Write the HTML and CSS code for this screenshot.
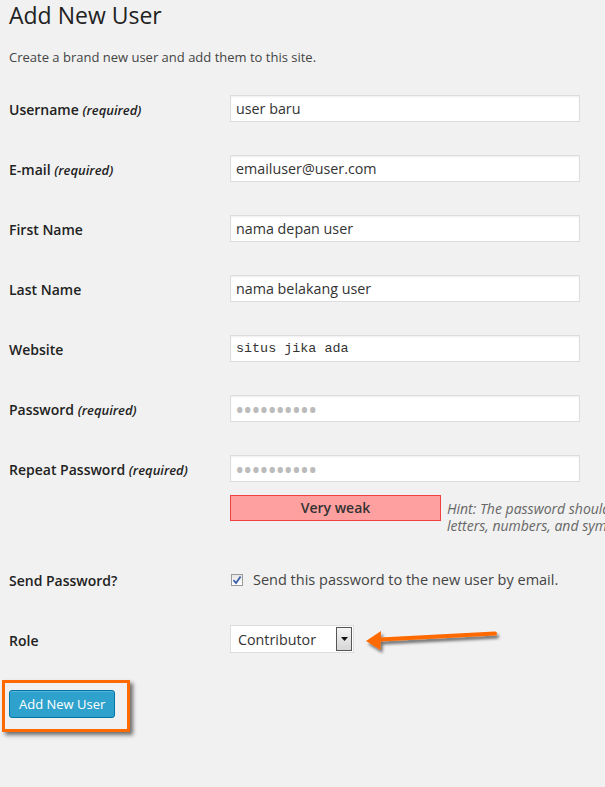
FILE: index.html
```html
<!DOCTYPE html>
<html lang="en">
<head>
<meta charset="UTF-8">
<meta name="viewport" content="width=device-width, initial-scale=1.0">
<title>Add New User</title>
<link rel="stylesheet" href="styles.css">
</head>
<body>
<div class="wrap">
    <h1>Add New User</h1>
    <p class="intro">Create a brand new user and add them to this site.</p>

    <form id="createuser" method="POST">
        <div class="row">
            <label for="user_login">Username <span class="req">(required)</span></label>
            <div class="field"><input type="text" id="user_login" value="user baru"></div>
        </div>
        <div class="row">
            <label for="email">E-mail <span class="req">(required)</span></label>
            <div class="field"><input type="text" id="email" value="emailuser@user.com"></div>
        </div>
        <div class="row">
            <label for="first_name">First Name</label>
            <div class="field"><input type="text" id="first_name" value="nama depan user"></div>
        </div>
        <div class="row">
            <label for="last_name">Last Name</label>
            <div class="field"><input type="text" id="last_name" value="nama belakang user"></div>
        </div>
        <div class="row">
            <label for="url">Website</label>
            <div class="field"><input type="text" id="url" class="code" value="situs jika ada"></div>
        </div>
        <div class="row">
            <label for="pass1">Password <span class="req">(required)</span></label>
            <div class="field"><input type="password" id="pass1" class="pass" value="aaaaaaaaaa"></div>
        </div>
        <div class="row row-pass2">
            <label for="pass2">Repeat Password <span class="req">(required)</span></label>
            <div class="field">
                <input type="password" id="pass2" class="pass" value="aaaaaaaaaa">
                <div class="strength-row">
                    <div class="strength">Very weak</div>
                    <p class="hint">
                        <span>Hint: The password should be at least seven characters long.</span>
                        <span>letters, numbers, and symbols like ! " ? $ % ^ &amp; ).</span>
                    </p>
                </div>
            </div>
        </div>
        <div class="row">
            <label>Send Password?</label>
            <div class="field check-field">
                <span class="checkbox">
                    <svg width="10" height="10" viewBox="0 0 10 10"><path d="M1.5 5.2 L4 8 L8.6 1.4" fill="none" stroke="#3f5fa8" stroke-width="1.8"/></svg>
                </span>
                Send this password to the new user by email.
            </div>
        </div>
        <div class="row">
            <label>Role</label>
            <div class="field">
                <div class="select">
                    <span>Contributor</span>
                    <span class="select-btn">
                        <svg width="7" height="4" viewBox="0 0 7 4"><path d="M0 0 H7 L3.5 4 Z" fill="#111"/></svg>
                    </span>
                </div>
            </div>
        </div>
        <div class="submit">
            <button type="button" class="button-primary">Add New User</button>
            <div class="highlight"></div>
        </div>
    </form>

    <svg class="arrow" width="150" height="40" viewBox="0 0 150 40">
        <defs>
            <filter id="shadow" x="-10%" y="-30%" width="130%" height="180%">
                <feDropShadow dx="2" dy="3" stdDeviation="1.6" flood-color="#000" flood-opacity="0.55"/>
            </filter>
        </defs>
        <g filter="url(#shadow)">
            <path d="M16 19.5 L131 13.5" stroke="#ff6a00" stroke-width="4" stroke-linecap="round"/>
            <path d="M2 21 L17 11 L16.5 30 Z" fill="#ff6a00"/>
        </g>
    </svg>
</div>
</body>
</html>
```

FILE: styles.css
```css
html, body {
    margin: 0;
    padding: 0;
    width: 100%;
    height: 100%;
    background-color: #f1f1f1;
    font-family: "Open Sans", sans-serif;
    color: #444;
    overflow: hidden;
}
.wrap {
    position: relative;
    padding-left: 9px;
}
h1 {
    margin: 0;
    padding-top: 1px;
    font-size: 23px;
    font-weight: 400;
    line-height: 29px;
    color: #222;
}
.intro {
    margin: 13px 0 0;
    font-size: 13px;
    line-height: 28px;
}
form {
    margin-top: 8px;
}
.row {
    display: flex;
    align-items: flex-start;
    padding: 16px 0 17px;
}
.row label {
    width: 221px;
    flex-shrink: 0;
    font-size: 14px;
    font-weight: 600;
    line-height: 29px;
    height: 27px;
    color: #222;
}
.req {
    font-style: italic;
    font-size: 13px;
}
.field {
    width: 350px;
    flex-shrink: 0;
}
input[type="text"],
input[type="password"] {
    display: block;
    width: 350px;
    height: 27px;
    margin: 0;
    padding: 3px 5px;
    border: 1px solid #ddd;
    box-shadow: inset 0 1px 2px rgba(0, 0, 0, 0.07);
    background-color: #fff;
    box-sizing: border-box;
    font-family: "Open Sans", sans-serif;
    font-size: 14.3px;
    color: #333;
    outline: none;
}
input.code {
    font-family: "Liberation Mono", monospace;
    font-size: 13.4px;
}
input.pass {
    padding: 0 4px;
    color: #bbb;
    font-size: 25px;
    line-height: 25px;
    letter-spacing: -1.3px;
}
.row-pass2 {
    padding-bottom: 16px;
}
.strength-row {
    display: flex;
    align-items: flex-start;
    margin-top: 13px;
}
.strength {
    width: 211px;
    height: 26px;
    flex-shrink: 0;
    box-sizing: border-box;
    border: 1px solid #f04040;
    background-color: #ffa0a0;
    text-align: center;
    font-size: 14px;
    font-weight: 600;
    line-height: 24px;
    color: #333;
}
.hint {
    margin: 5px 0 0 6px;
    font-size: 14px;
    font-style: italic;
    line-height: 17px;
    color: #666;
    white-space: nowrap;
}
.hint span {
    display: block;
}
.check-field {
    display: flex;
    align-items: center;
    height: 27px;
    font-size: 14.5px;
    color: #444;
}
.checkbox {
    display: flex;
    align-items: center;
    justify-content: center;
    width: 12px;
    height: 12px;
    margin: 0 10px 0 1px;
    border: 1px solid #9a9a9a;
    background: linear-gradient(#e6e6e6, #fff);
    box-sizing: border-box;
}
.select {
    display: flex;
    align-items: center;
    justify-content: space-between;
    width: 124px;
    height: 28px;
    margin-top: -1px;
    padding: 1px 1px 1px 7px;
    border: 1px solid #ddd;
    background-color: #fff;
    box-sizing: border-box;
    font-size: 14.3px;
    color: #333;
}
.select-btn {
    display: flex;
    align-items: center;
    justify-content: center;
    width: 16px;
    height: 24px;
    border: 1px solid #555;
    background: linear-gradient(#f4f4f4, #d6d6d6);
    box-sizing: border-box;
}
.submit {
    position: relative;
    margin-top: 20px;
}
.button-primary {
    height: 28px;
    padding: 0 9px;
    border: 1px solid #0074a2;
    border-radius: 3px;
    background-color: #2ea2cc;
    box-shadow: inset 0 1px 0 rgba(120, 200, 230, 0.5);
    font-family: "Open Sans", sans-serif;
    font-size: 13px;
    color: #fff;
    cursor: pointer;
}
.highlight {
    position: absolute;
    left: -7px;
    top: -10px;
    width: 122px;
    height: 46px;
    border: 3px solid #ff6a00;
    box-shadow: 3px 3px 4px rgba(0, 0, 0, 0.55);
}
.arrow {
    position: absolute;
    left: 364px;
    top: 620px;
}
```
